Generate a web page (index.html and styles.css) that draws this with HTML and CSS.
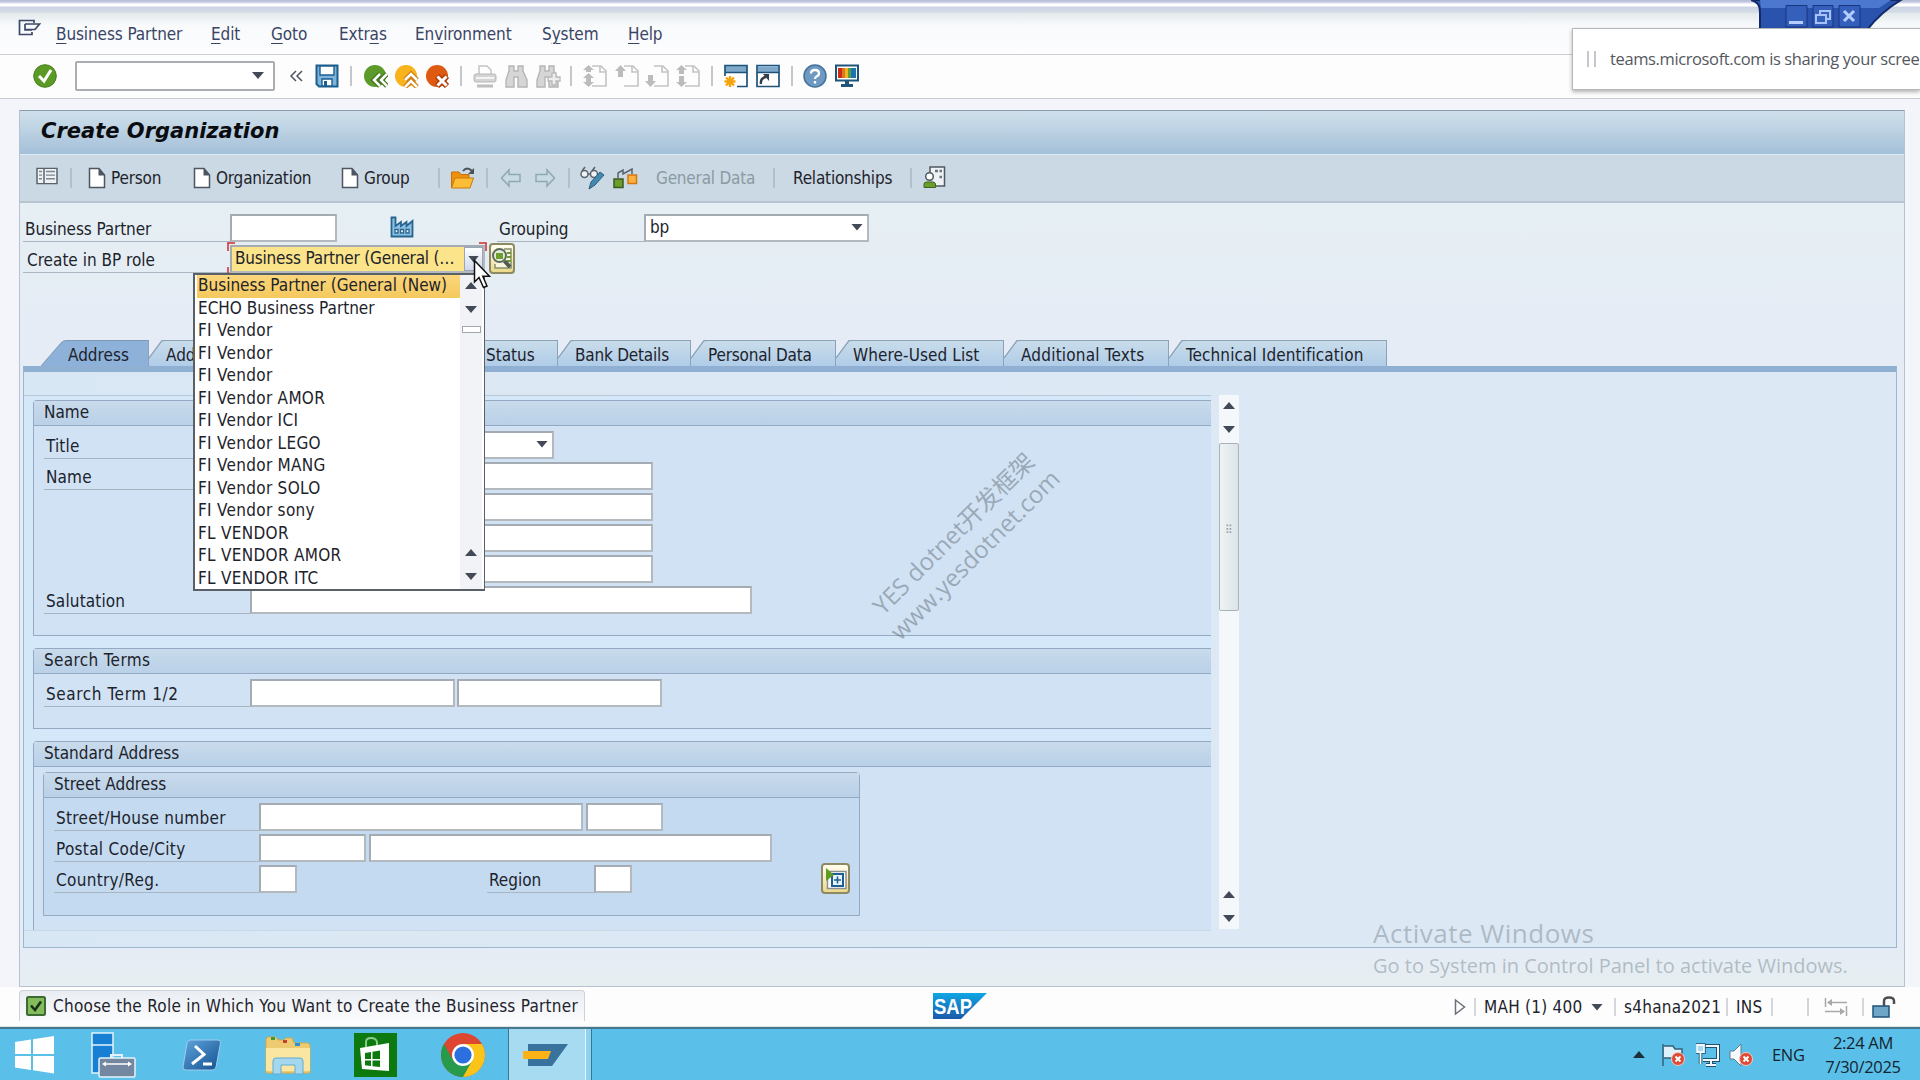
FILE: index.html
```
<!DOCTYPE html>
<html lang="en">
<head>
    <meta charset="UTF-8">
    <meta name="viewport" content="width=device-width, initial-scale=1.0">
    <title>Create Organization</title>
    <link rel="stylesheet" href="styles.css">
</head>
<body>
    <!-- shared icon shapes -->
    <svg class="defs" width="0" height="0">
        <defs>
            <linearGradient id="tabFill" x1="0" y1="0" x2="0" y2="1">
                <stop offset="0" stop-color="#c9ddea"/><stop offset="1" stop-color="#b0cce8"/>
            </linearGradient>
            <linearGradient id="sapFill" x1="0" y1="0" x2="0" y2="1">
                <stop offset="0" stop-color="#0fa6e4"/><stop offset="1" stop-color="#1b5bab"/>
            </linearGradient>
            <linearGradient id="psFill" x1="0" y1="0" x2="1" y2="1">
                <stop offset="0" stop-color="#5fa5dd"/><stop offset="1" stop-color="#14508f"/>
            </linearGradient>
            <symbol id="doc" viewBox="0 0 18 22">
                <path d="M1.5 1.5H11L16.5 8V20.500H1.500Z" fill="#fff" stroke="#4c5560" stroke-width="1.5"/>
                <path d="M10.500 1V8.500H17Z" fill="#4c5560"/>
            </symbol>
            <symbol id="page" viewBox="0 0 24 24">
                <path d="M9 2H18L23 7V22H9" fill="none" stroke="#c3c3c3" stroke-width="1.600"/>
                <path d="M17 2V8H23" fill="none" stroke="#c3c3c3" stroke-width="1.600"/>
            </symbol>
            <symbol id="bino" viewBox="0 0 24 24">
                <path d="M4 2H9V7H13V2H18V7L22 16V23H13V13H9V23H1V16L4 7Z" fill="#d6d6d6" stroke="#b5b5b5" stroke-width="1.400"/>
            </symbol>
            <symbol id="corner" viewBox="0 0 16 26" preserveAspectRatio="none">
                <path d="M0 18L13 .5H16V26H0Z" fill="url(#tabFill)"/>
                <path d="M0 18L13 .5H16" fill="none" stroke="#8ba3b8" stroke-width="1.300"/>
            </symbol>
            <symbol id="redx" viewBox="0 0 14 14">
                <circle cx="7" cy="7" r="6.500" fill="#dd4a35" stroke="#f6c9c0"/>
                <path d="M4.500 4.500L9.500 9.500M9.500 4.500L4.500 9.500" stroke="#fff" stroke-width="2"/>
            </symbol>
        </defs>
    </svg>

    <div class="frame-top"></div>

    <nav class="menubar">
        <svg width="24" height="20" viewBox="0 0 24 20"><path d="M16 4V1.500H1.500V15.500H14V13M7 5H21.500L17 10.500H8M7 5V11H14" fill="none" stroke="#3c4968" stroke-width="1.700"/></svg>
        <span><u>B</u>usiness Partner</span>
        <span><u>E</u>dit</span>
        <span><u>G</u>oto</span>
        <span>Extr<u>a</u>s</span>
        <span>En<u>v</u>ironment</span>
        <span>S<u>y</u>stem</span>
        <span><u>H</u>elp</span>
    </nav>

    <div class="toolbar">
        <svg width="24" height="24" viewBox="0 0 24 24"><circle cx="12" cy="12" r="11.300" fill="#5b9a25" stroke="#47801d"/><path d="M6 12L11 17L18 6" fill="none" stroke="#fff" stroke-width="3"/></svg>
        <div class="command"><i class="arrow-down"></i></div>
        <svg width="15" height="14" viewBox="0 0 15 14"><path d="M7 2L2 7L7 12M13 2L8 7L13 12" fill="none" stroke="#4d5461" stroke-width="1.500"/></svg>
        <svg width="24" height="24" viewBox="0 0 24 24"><path d="M1.500 1.500H22.500V22.500H4L1.500 20Z" fill="#7fb3dc" stroke="#1c5e8e" stroke-width="2"/><path d="M5 2H19V11H5ZM7 15H17V22H7Z" fill="#fff" stroke="#1c5e8e" stroke-width="1.400"/><path d="M9 17H12V22H9Z" fill="#1c5e8e"/></svg>
        <i class="sep"></i>
        <svg width="25" height="24" viewBox="0 0 25 24"><circle cx="12" cy="12" r="11" fill="#5c9a2a"/><path d="M17 10L11 16L17 22M24 10L18 16L24 22" fill="none" stroke="#3f741b" stroke-width="5"/><path d="M17 10L11 16L17 22M24 10L18 16L24 22" fill="none" stroke="#fff" stroke-width="2.500"/></svg>
        <svg width="25" height="24" viewBox="0 0 25 24"><circle cx="12" cy="12" r="11" fill="#f9b31c"/><path d="M11 16L17 10L23 16M11 23L17 17L23 23" fill="none" stroke="#cf7f10" stroke-width="5"/><path d="M11 16L17 10L23 16M11 23L17 17L23 23" fill="none" stroke="#fff" stroke-width="2.500"/></svg>
        <svg width="25" height="24" viewBox="0 0 25 24"><circle cx="12" cy="12" r="11" fill="#dd5a10"/><path d="M12 12L22 22M22 12L12 22" stroke="#b03d08" stroke-width="6"/><path d="M12.500 12.500L21.500 21.500M21.500 12.500L12.500 21.500" stroke="#fff" stroke-width="3"/></svg>
        <i class="sep"></i>
        <svg width="24" height="24" viewBox="0 0 24 24"><path d="M6 10V2H14L18 6V10" fill="#fff" stroke="#c3c3c3" stroke-width="1.500"/><rect x="1" y="10" width="22" height="8" rx="2" fill="#d4d4d4" stroke="#b7b7b7"/><path d="M3 14H21" stroke="#fff" stroke-width="1.500"/><path d="M4 22H20" stroke="#bdbdbd" stroke-width="3"/></svg>
        <svg width="24" height="24"><use href="#bino"/></svg>
        <svg width="25" height="24" viewBox="0 0 25 24"><use href="#bino" width="24" height="24"/><path d="M16 9H20V13H24V17H20V21H16V17H12V13H16Z" fill="#eee" stroke="#b9b9b9" stroke-width="1.300"/></svg>
        <i class="sep"></i>
        <svg width="24" height="24"><use href="#page"/><path d="M5.500 1L11 6H8V8H3V6H0ZM5.500 9L11 14H8V18H11L5.500 23L0 18H3V14H0Z" fill="#bcbcbc"/></svg>
        <svg width="24" height="24"><use href="#page"/><path d="M5.500 1L11 7H8V13H3V7H0Z" fill="#bcbcbc"/></svg>
        <svg width="24" height="24"><use href="#page"/><path d="M5.500 23L11 17H8V11H3V17H0Z" fill="#bcbcbc"/></svg>
        <svg width="24" height="24"><use href="#page"/><path d="M5.500 1L11 6H8V10H3V6H0ZM5.500 23L11 18H8V12H3V18H0Z" fill="#bcbcbc"/></svg>
        <i class="sep"></i>
        <svg width="24" height="24" viewBox="0 0 24 24"><path d="M1 1.500H23V22.500H10V12H1Z" fill="#fff"/><path d="M1 1.500H23V8H1Z" fill="#7ea9cb"/><path d="M1 12V1.500H23V22.500H13M1 8.500H23" fill="none" stroke="#1e5379" stroke-width="1.700"/><path d="M6 12V23M.5 17.500H11.500M2 13.500L10 21.500M10 13.500L2 21.500" stroke="#f7a30b" stroke-width="2.400"/></svg>
        <svg width="24" height="24" viewBox="0 0 24 24"><path d="M1 1.500H23V22.500H1Z" fill="#fff" stroke="#1e5379" stroke-width="1.700"/><path d="M2 2.300H22V8H2Z" fill="#7ea9cb"/><path d="M1 8.500H23" stroke="#1e5379" stroke-width="1.500"/><path d="M5 20Q4 14 10 13" fill="none" stroke="#333d47" stroke-width="2.400"/><path d="M7 10H13V17Z" fill="#333d47"/></svg>
        <i class="sep"></i>
        <svg width="24" height="24" viewBox="0 0 24 24"><circle cx="12" cy="12" r="11" fill="#6e9ac2" stroke="#44719a" stroke-width="1.500"/><path d="M8 9.500Q8 6 12 6T16 9.500Q16 11.500 13.500 12.500Q12 13.200 12 15M12 17V19.500" fill="none" stroke="#fff" stroke-width="2.300"/></svg>
        <svg width="24" height="24" viewBox="0 0 24 24"><rect x="1" y="1.500" width="22" height="15" fill="#fff" stroke="#1f5578" stroke-width="2"/><path d="M3 4H7V14H3Z" fill="#cc2a17"/><path d="M7 4H10V14H7Z" fill="#d97a1c"/><path d="M10 4H13V14H10Z" fill="#f0b323"/><path d="M13 4H16V14H13Z" fill="#5d9c3a"/><path d="M16 4H21V14H16Z" fill="#1c74b4"/><path d="M10 17H14V20H18V23H6V20H10Z" fill="#1f5578"/></svg>
    </div>

    <main class="work">
        <h1>Create Organization</h1>

        <div class="appbar">
            <svg width="22" height="18" viewBox="0 0 22 20" preserveAspectRatio="none"><path d="M1 1.500H21V18.500H1Z" fill="#eef2f5" stroke="#59636d" stroke-width="1.500"/><path d="M8 2V18" stroke="#59636d" stroke-width="1.500"/><path d="M3 5H6M3 9H6M3 13H6M10 5H19M10 9H19M10 13H19" stroke="#7c868f" stroke-width="1.600"/></svg>
            <i class="sep"></i>
            <span class="action"><svg width="18" height="22"><use href="#doc"/></svg>Person</span>
            <span class="action"><svg width="18" height="22"><use href="#doc"/></svg>Organization</span>
            <span class="action"><svg width="18" height="22"><use href="#doc"/></svg>Group</span>
            <i class="sep"></i>
            <svg width="25" height="22" viewBox="0 0 25 22"><path d="M1.500 20.500V5H9L11 7.500H19V20.500Z" fill="#f0900b" stroke="#c46f08"/><path d="M1.500 21L5 11H23.500L20 21Z" fill="#fdbd37" stroke="#c97a0d"/><path d="M13 4Q17 -1 22 4" fill="none" stroke="#4b5157" stroke-width="2"/><path d="M24 1V7H18Z" fill="#4b5157"/></svg>
            <i class="sep"></i>
            <svg width="22" height="20" viewBox="0 0 22 20"><path d="M1.500 10L9 2V6.500H20V13.500H9V18Z" fill="#c6dbe4" stroke="#8fa9b4" stroke-width="1.500"/></svg>
            <svg width="22" height="20" viewBox="0 0 22 20"><path d="M20.500 10L13 2V6.500H2V13.500H13V18Z" fill="#c6dbe4" stroke="#8fa9b4" stroke-width="1.500"/></svg>
            <i class="sep"></i>
            <svg width="25" height="24" viewBox="0 0 25 24"><circle cx="4.500" cy="8" r="3.500" fill="#eef2f4" stroke="#59636d" stroke-width="1.500"/><circle cx="14" cy="8" r="3.500" fill="#eef2f4" stroke="#59636d" stroke-width="1.500"/><path d="M8 8H10.500M2 5L5 1M12 5L15 1" stroke="#59636d" stroke-width="1.500" fill="none"/><path d="M9 23L11 16L20 6L24 9L15 19Z" fill="#4388ae" stroke="#2b607f"/></svg>
            <svg width="25" height="24" viewBox="0 0 25 24"><path d="M5 12V7L10 4V8L19 3V8" fill="none" stroke="#59636d" stroke-width="1.500"/><rect x="1" y="13" width="9" height="8.500" fill="#6b9d2c" stroke="#3c5a22" stroke-width="1.500"/><rect x="15" y="9" width="8.500" height="8.500" fill="#fbb23c" stroke="#d47712" stroke-width="1.500"/></svg>
            <span class="off">General Data</span>
            <i class="sep"></i>
            <span>Relationships</span>
            <i class="sep"></i>
            <svg width="23" height="23" viewBox="0 0 23 23"><path d="M7 7V1H21.500V20H13" fill="#eef2f4" stroke="#4f5860" stroke-width="1.500"/><path d="M12 5H15M16.500 5H19M16.500 11H19" stroke="#6c757d" stroke-width="2.500"/><circle cx="6.500" cy="10.500" r="3.800" fill="#fff" stroke="#4f5860" stroke-width="1.500"/><path d="M1 21.500V18Q1 16 4 16H9Q12.500 16 12.500 18V21.500Z" fill="#6b9d2c" stroke="#3f6420"/></svg>
        </div>

        <section class="header-form">
            <div class="row row-partner">
                <label>Business Partner</label>
                <div class="field"></div>
                <svg width="24" height="22" viewBox="0 0 24 22"><path d="M1.500 20.500V1.500H5.500V10L11 6V10L16.500 6V10L22.500 5V20.500Z" fill="#8cc0e2" stroke="#27648f" stroke-width="1.800"/><path d="M5 13.500H8V17H5ZM10.500 13.500H13.500V17H10.500ZM16 13.500H19V17H16Z" fill="#fff" stroke="#27648f" stroke-width="1.300"/></svg>
                <label>Grouping</label>
                <div class="field select">bp<i class="arrow-down"></i></div>
            </div>
            <div class="row row-role">
                <label>Create in BP role</label>
                <div class="field role">
                    <span>Business Partner (General (…</span>
                    <b><i class="arrow-down"></i></b>
                    <svg class="focus" width="260" height="34" viewBox="0 0 260 34"><path d="M1 9V1H8M1 25V32H8M252 1H259V9" fill="none" stroke="#d02a2a" stroke-width="1.500"/></svg>
                </div>
                <div class="icon-button">
                    <svg width="22" height="24" viewBox="0 0 22 24"><path d="M13 2H20V21H4V17" fill="#f7f5dc" stroke="#87906a" stroke-width="1.500"/><path d="M16 6H20M16 10H20M16 14H20" stroke="#6b9d2c" stroke-width="2"/><circle cx="8.500" cy="8.500" r="6.500" fill="#e3ecdc" stroke="#5c6b5c" stroke-width="2"/><path d="M5 6H12V12H5Z" fill="#6f9f2f"/><path d="M13.500 14L19 20" stroke="#4f5b52" stroke-width="4"/></svg>
                </div>
            </div>
        </section>

        <div class="tabs">
            <div class="tab active"><svg width="26" height="26" viewBox="0 0 26 26"><path d="M0 26L20 3Q22 .5 25 .5H26V26Z" fill="#8db1d8"/><path d="M0 26L20 3Q22 .5 25 .5H26" fill="none" stroke="#7d98b2"/></svg><span>Address</span></div>
            <div class="tab overview"><svg width="16" height="26"><use href="#corner"/></svg><span>Address Overview</span></div>
            <div class="tab ident"><svg width="16" height="26"><use href="#corner"/></svg><span></span></div>
            <div class="tab status-tab"><svg width="16" height="26"><use href="#corner"/></svg><span>Status</span></div>
            <div class="tab bank"><svg width="16" height="26"><use href="#corner"/></svg><span>Bank Details</span></div>
            <div class="tab personal"><svg width="16" height="26"><use href="#corner"/></svg><span>Personal Data</span></div>
            <div class="tab where"><svg width="16" height="26"><use href="#corner"/></svg><span>Where-Used List</span></div>
            <div class="tab texts"><svg width="16" height="26"><use href="#corner"/></svg><span>Additional Texts</span></div>
            <div class="tab technical"><svg width="16" height="26"><use href="#corner"/></svg><span>Technical Identification</span></div>
        </div>

        <section class="tab-panel">
            <div class="scroll-area">
                <div class="group group-name">
                    <h2>Name</h2>
                    <div class="row"><label>Title</label><div class="field select w-title"><i class="arrow-down"></i></div></div>
                    <div class="row"><label>Name</label><div class="field w-name"></div></div>
                    <div class="row"><label class="blank"></label><div class="field w-name"></div></div>
                    <div class="row"><label class="blank"></label><div class="field w-name"></div></div>
                    <div class="row"><label class="blank"></label><div class="field w-name"></div></div>
                    <div class="row"><label>Salutation</label><div class="field w-salutation"></div></div>
                </div>

                <div class="group group-search">
                    <h2>Search Terms</h2>
                    <div class="row"><label>Search Term 1/2</label><div class="field w-term"></div><div class="field w-term"></div></div>
                </div>

                <div class="group group-standard">
                    <h2>Standard Address</h2>
                    <div class="group group-street">
                        <h2>Street Address</h2>
                        <div class="row"><label>Street/House number</label><div class="field w-street"></div><div class="field w-house"></div></div>
                        <div class="row"><label>Postal Code/City</label><div class="field w-postal"></div><div class="field w-city"></div></div>
                        <div class="row">
                            <label>Country/Reg.</label><div class="field w-code"></div>
                            <label class="region">Region</label><div class="field w-code"></div>
                            <div class="icon-button expand">
                                <svg width="24" height="26" viewBox="0 0 24 26"><path d="M3.500 5.500H22V22.500H3.500Z" fill="#fff" stroke="#8b8f94" stroke-width="1.500"/><path d="M8 8H19V20H8Z" fill="#e8f4fb" stroke="#1d5f92" stroke-width="2"/><path d="M10 14H17M13.500 10.500V17.500" stroke="#1d5f92" stroke-width="1.600"/><path d="M2 2L10 9L2 15Z" fill="#5f9a22"/></svg>
                            </div>
                        </div>
                    </div>
                </div>
            </div>

            <div class="scrollbar">
                <i class="arrow-up"></i>
                <i class="arrow-down"></i>
                <div class="thumb">⠿</div>
                <i class="arrow-up last"></i>
                <i class="arrow-down"></i>
            </div>
        </section>
    </main>

    <div class="statusbar">
        <div class="message">
            <svg width="20" height="20" viewBox="0 0 20 20"><rect x="1" y="1" width="18" height="18" rx="1.500" fill="#84bb5c" stroke="#3b6b33" stroke-width="2"/><path d="M5 9.500L9 14L15 5.500" fill="none" stroke="#16301a" stroke-width="2.500"/></svg>
            <span>Choose the Role in Which You Want to Create the Business Partner</span>
        </div>
        <svg class="sap" width="55" height="27" viewBox="0 0 55 27"><path d="M0 0H54L28 26H0Z" fill="url(#sapFill)"/><text x="1" y="21" textLength="38" lengthAdjust="spacingAndGlyphs">SAP</text></svg>
        <div class="system">
            <svg width="12" height="18" viewBox="0 0 12 18"><path d="M1.500 2L10.500 9L1.500 16Z" fill="#fff" stroke="#6c7179" stroke-width="1.500"/></svg>
            <i class="sep"></i>
            <span>MAH (1) 400</span>
            <i class="arrow-down"></i>
            <i class="sep"></i>
            <span>s4hana2021</span>
            <i class="sep"></i>
            <span>INS</span>
            <i class="sep"></i>
            <i class="sep"></i>
            <svg width="24" height="18" viewBox="0 0 24 18"><path d="M1.500 0V9M4 4.500H23M22.500 8V18M1 13.500H20" stroke="#a9a9a9" stroke-width="1.500"/><path d="M3 4.500L8 1V8ZM21 13.500L16 10V17Z" fill="#a9a9a9"/></svg>
            <i class="sep"></i>
            <svg width="24" height="22" viewBox="0 0 24 22"><path d="M12 10V5Q12 1.500 17 1.500T22 5V8" fill="none" stroke="#4b4f54" stroke-width="2.500"/><rect x="1" y="10" width="16" height="11" fill="#6fa6c8" stroke="#1f5379" stroke-width="1.500"/></svg>
        </div>
    </div>

    <footer class="taskbar">
        <svg class="start" width="40" height="38" viewBox="0 0 40 38"><path d="M0 6L16 3.500V18H0ZM18 3.200L39 0V18H18ZM0 20H16V34L0 31.500ZM18 20H39V37.500L18 34.300Z" fill="#fff"/></svg>
        <svg width="46" height="46" viewBox="0 0 46 46"><rect x="1" y="1" width="21" height="40" fill="#1780d4" stroke="#e4f3fb" stroke-width="1.500"/><path d="M1 13H22" stroke="#e4f3fb" stroke-width="1.500"/><path d="M20 27V23H31V27" fill="none" stroke="#e4f3fb" stroke-width="2"/><rect x="8" y="26" width="36" height="19" rx="1.500" fill="#7487a0" stroke="#e4f3fb" stroke-width="1.500"/><path d="M13 32H39" stroke="#fff" stroke-width="1.500"/><path d="M11 32L15 29.500V34.500ZM41 32L37 29.500V34.500Z" fill="#fff"/></svg>
        <svg width="40" height="32" viewBox="0 0 40 32"><path d="M8 1H36Q39 1 38.500 4L34 28Q33.500 31 30 31H4Q.5 31 1 28L5 4Q5.500 1 8 1Z" fill="url(#psFill)" stroke="#9ecbec"/><path d="M13 7L22 15.500L10 25M21 25H30" fill="none" stroke="#fff" stroke-width="3"/></svg>
        <svg width="48" height="40" viewBox="0 0 48 40"><path d="M2 5Q2 2 5 2H12L14 5H20L22 3H28L30 8H43Q46 8 46 11V38H2Z" fill="#eecb70" stroke="#d6ab4a"/><path d="M2 13H46V36H2Z" fill="#fae6a0"/><path d="M7 2H11V5H7Z" fill="#3a9a3a"/><path d="M19 5H23V8H19Z" fill="#c9402f"/><path d="M31 8H36V11H31Z" fill="#2d8fd4"/><path d="M9 39V26Q9 23 12 23H36Q39 23 39 26V39H31V30H17V39Z" fill="#a5d8ef" stroke="#5daed6"/></svg>
        <svg width="43" height="44" viewBox="0 0 43 44"><rect width="43" height="44" fill="#0c7a0e"/><path d="M12 14V9Q12 5 17 5T23 9V13" fill="none" stroke="#8cc98c" stroke-width="2"/><path d="M6 15L35 10V38L8 36Z" fill="#fff"/><path d="M11 20L17 19V26H11ZM18.500 18.800L26 17.500V26H18.500ZM11 27.500H17V33L11 32.300ZM18.500 27.500H26V34L18.500 33.200Z" fill="#0c7a0e"/></svg>
        <svg width="46" height="46" viewBox="0 0 46 46"><circle cx="23" cy="23" r="22" fill="#dd4631"/><path d="M4 12A22 22 0 0 0 23 45L33 28L23 32L13 28Z" fill="#279a4b"/><path d="M23 12H42A22 22 0 0 1 23 45L32.500 28Z" fill="#fbc41b"/><circle cx="23" cy="23" r="11" fill="#fff"/><circle cx="23" cy="23" r="8.600" fill="#2b6fe0"/></svg>
        <div class="task-active"><svg width="46" height="22" viewBox="0 0 46 22"><path d="M5 0H45L29 22H5Z" fill="#38729d"/><path d="M0 7H28L25 15H0Z" fill="#fbb216"/></svg></div>
        <div class="tray">
            <i class="arrow-up"></i>
            <svg width="24" height="24" viewBox="0 0 24 24"><path d="M2 23V1M3 3H12L14 6H21V15H3" fill="#dff1fa" stroke="#33617c" stroke-width="1.500"/><use href="#redx" x="10" y="9" width="14" height="14"/></svg>
            <svg width="24" height="24" viewBox="0 0 24 24"><path d="M8 3H22V17H7M15 17V21M10 22H20" fill="none" stroke="#21506c" stroke-width="4"/><path d="M8 3H22V17H7M15 17V21M10 22H20" fill="none" stroke="#eef8fd" stroke-width="2"/><path d="M1 2H8V9H1ZM4.500 9V21" fill="#a9d9ee" stroke="#21506c" stroke-width="3.500"/><path d="M1 2H8V9H1ZM4.500 9V21" fill="#a9d9ee" stroke="#eef8fd" stroke-width="1.800"/></svg>
            <svg width="24" height="24" viewBox="0 0 24 24"><path d="M1 8H5L12 1V23L5 16H1Z" fill="#f4fafd" stroke="#5e7c8c"/><use href="#redx" x="10" y="9" width="14" height="14"/></svg>
            <span>ENG</span>
            <div class="clock">2:24 AM<br>7/30/2025</div>
        </div>
    </footer>

    <!-- open role list -->
    <div class="dropdown">
        <ul>
            <li class="selected tight">Business Partner (General (New)</li>
            <li class="tight">ECHO Business Partner</li>
            <li>FI Vendor</li>
            <li>FI Vendor</li>
            <li>FI Vendor</li>
            <li>FI Vendor AMOR</li>
            <li>FI Vendor ICI</li>
            <li>FI Vendor LEGO</li>
            <li>FI Vendor MANG</li>
            <li>FI Vendor SOLO</li>
            <li>FI Vendor sony</li>
            <li>FL VENDOR</li>
            <li>FL VENDOR AMOR</li>
            <li>FL VENDOR ITC</li>
        </ul>
        <div class="list-scroll">
            <i class="arrow-up"></i>
            <i class="arrow-down"></i>
            <div class="list-thumb"></div>
            <i class="arrow-up last"></i>
            <i class="arrow-down"></i>
        </div>
    </div>

    <svg class="cursor" width="20" height="32" viewBox="0 0 20 32"><path d="M1.500 1.500V23L6 18.500L10.500 28.500L14 27L9.800 17.300H16.500Z" fill="#fff" stroke="#111" stroke-width="1.500"/></svg>

    <!-- remote desktop bar -->
    <svg class="rdp-bar" width="152" height="30" viewBox="0 0 152 30">
        <path d="M0 0Q9 2 9 12V30H116Q130 12 150 0Z" fill="#2a53ad" stroke="#122a66" stroke-width="2"/>
        <path d="M9 0H140L128 8H10Z" fill="#4d78cf"/>
        <path d="M35 5.500H56V27H35ZM62 5.500H82V27H62ZM88 5.500H109V27H88Z" fill="#3460bb" stroke="#173581"/>
        <path d="M38 22.500H52" stroke="#b6ceff" stroke-width="3"/>
        <path d="M65 15H75V23H65ZM69 15V11H79V19H75" fill="none" stroke="#a7c2f7" stroke-width="2"/>
        <path d="M93 11L103 21M103 11L93 21" stroke="#b6ceff" stroke-width="3"/>
    </svg>
    <div class="share-toast"><i></i><span>teams.microsoft.com is sharing your scree</span></div>

    <div class="watermark">YES dotnet开发框架<br>www.yesdotnet.com</div>
    <div class="activate"><strong>Activate Windows</strong><span>Go to System in Control Panel to activate Windows.</span></div>
</body>
</html>
```
FILE: styles.css
```
* {
    box-sizing: border-box;
}

body {
    margin: 0;
    width: 1920px;
    height: 1080px;
    overflow: hidden;
    position: relative;
    display: flex;
    flex-direction: column;
    font-family: "DejaVu Sans Condensed", "Open Sans", sans-serif;
    font-size: 17px;
    line-height: 22px;
    color: #1d232b;
    background-color: #f3f5fa;
    white-space: nowrap;
}

svg {
    display: block;
    flex: none;
}

.defs {
    position: absolute;
}

h1, h2, ul {
    margin: 0;
    padding: 0;
}

.arrow-down, .arrow-up {
    display: block;
    flex: none;
    width: 12px;
    height: 7px;
    background-color: #434a57;
    clip-path: polygon(0 0, 100% 0, 50% 100%);
}

.arrow-up {
    clip-path: polygon(50% 0, 100% 100%, 0 100%);
}

.sep {
    width: 2px;
    height: 20px;
    background-color: #c3c6ca;
}

/* window frame, menu and system toolbar */
.frame-top {
    height: 13px;
    flex: none;
    background: linear-gradient(#b7bdd8 0, #c3c9df 2px, #fff 4px, #fff 6px, #cbd4e3 7px, #d6dee8 13px);
}

.menubar {
    height: 42px;
    flex: none;
    display: grid;
    grid-template-columns: 38px 155px 60px 68px 76px 127px 86px auto;
    align-items: center;
    padding: 0 0 0 18px;
    color: #3a4566;
    background: linear-gradient(#e3e9ec, #f8fafb 30%, #fdfdfe);
    border-bottom: 1px solid #c9ccd0;
    letter-spacing: -0.1px;
}

.menubar svg {
    margin-top: -9px;
}

.menubar u {
    text-underline-offset: 3px;
    text-decoration-thickness: 1px;
}

.toolbar {
    height: 44px;
    flex: none;
    display: grid;
    grid-template-columns: 42px 214px 26px 35px 13px 31px 31px 35px 13px 32px 31px 34px 13px 32px 30px 31px 35px 13px 32px 35px 12px 32px 24px;
    align-items: center;
    padding: 0 0 2px 33px;
    background-color: #fdfdfe;
    border-bottom: 1px solid #c9ccd0;
}

.command {
    width: 200px;
    height: 30px;
    display: flex;
    align-items: center;
    justify-content: flex-end;
    padding-right: 9px;
    background-color: #fff;
    border: 2px solid #aaaeb3;
    border-radius: 2px;
}

/* work area */
.work {
    width: 1886px;
    height: 877px;
    flex: none;
    margin: 11px 0 0 19px;
    border: 1px solid #b6c3d0;
    border-top-color: #8b9eb0;
    background: linear-gradient(#e6eff3 90px, #e5ecf5 200px, #e5ecf5 840px, #e6eef1);
}

h1 {
    height: 44px;
    padding-left: 21px;
    font-family: "DejaVu Sans", sans-serif;
    font-size: 21px;
    font-style: italic;
    line-height: 41px;
    color: #0a0c10;
    background: linear-gradient(#cfe0eb, #b4cbdf 65%, #a2c0d9);
    border-bottom: 1px solid #dfeaf2;
}

.appbar {
    height: 48px;
    display: grid;
    grid-template-columns: 34px 18px 105px 148px 97px 12px 36px 14px 34px 34px 12px 33px 43px 117px 20px 117px 13px 24px;
    align-items: center;
    padding: 0 0 1px 16px;
    background-color: #cbd9e4;
    border-bottom: 2px solid #b7c5d1;
    letter-spacing: -0.2px;
}

.appbar > svg:first-child {
    margin-top: -3px;
}

.appbar .sep {
    background-color: #b2c0ca;
}

.action {
    display: flex;
    align-items: center;
    gap: 5px;
}

.off {
    color: #8b99a3;
}

.header-form {
    height: 137px;
    padding: 11px 0 0 3px;
}

.row {
    display: flex;
    height: 31px;
    align-items: flex-start;
}

.row label {
    height: 28px;
    padding: 4px 0 0 2px;
    border-bottom: 1px solid #a9b5c1;
}

.row .blank {
    border-color: transparent;
}

.field {
    height: 28px;
    flex: none;
    position: relative;
    background-color: #fff;
    border: 2px solid #a4abb2;
    border-right-color: #b4b9be;
    border-bottom-color: #b4b9be;
    padding: 1px 4px;
}

.select {
    display: flex;
    align-items: center;
    padding: 0 4px 2px;
}

.select .arrow-down {
    margin-left: auto;
}

.row-partner {
    display: grid;
    grid-template-columns: 207px 160px 107px 147px 225px;
    letter-spacing: -0.1px;
}

.row-partner .field:nth-child(2) {
    width: 107px;
}

.row-partner svg {
    margin-top: 2px;
}

.row-role label {
    width: 207px;
    padding-left: 4px;
}

.role {
    width: 255px;
    display: flex;
    padding: 0;
    letter-spacing: -0.2px;
    background-color: #fbe48a;
}

.role span {
    width: 232px;
    padding-left: 3px;
    line-height: 23px;
}

.role b {
    width: 19px;
    display: grid;
    place-items: center;
    background: linear-gradient(#fff, #cfd8ea);
    border: 1px solid #9aa6bb;
}

.role .arrow-down {
    width: 11px;
}

.focus {
    position: absolute;
    left: -5px;
    top: -5px;
}

.icon-button {
    width: 26px;
    height: 31px;
    display: grid;
    place-items: center;
    margin: -2px 0 0 4px;
    background: linear-gradient(#fffdee, #ecd98c);
    border: 2px solid #8d8a63;
    border-radius: 4px;
}

/* tabs */
.tabs {
    height: 26px;
    display: flex;
    padding-left: 21px;
}

.tab {
    display: flex;
    border-right: 1px solid #8ba3b8;
}

.tab span {
    flex: 1;
    padding-top: 3px;
    padding-left: 1px;
    border-top: 1px solid #8ba3b8;
    background: linear-gradient(#c9ddea, #b0cce8);
}

.tab.active {
    width: 108px;
}

.tab.active span {
    background: #8db1d8;
    border-color: #7d98b2;
}

.tab.overview { width: 164px; }
.tab.ident { width: 156px; }
.tab.status-tab { width: 89px; }
.tab.bank { width: 133px; letter-spacing: -0.2px; }
.tab.personal { width: 145px; letter-spacing: -0.2px; }
.tab.where { width: 168px; letter-spacing: 0.1px; }
.tab.texts { width: 165px; letter-spacing: 0.2px; }
.tab.technical { width: 218px; letter-spacing: 0.1px; }

.tab-panel {
    width: 1874px;
    height: 582px;
    margin-left: 3px;
    display: flex;
    padding-top: 23px;
    border: 1px solid #9db6cf;
    border-top: 6px solid #8fb0d2;
    background: linear-gradient(90deg, #d8e7f4, #dbe8f4 20%, #dde8f5 80%);
    position: relative;
}

.scroll-area {
    width: 1187px;
    height: 536px;
    padding: 4px 0 0 9px;
    overflow: hidden;
    background-color: #d5e8f9;
    border-top: 1px solid #b9c8d8;
    border-bottom: 1px solid #c8daea;
}

.group {
    border: 1px solid #93aac2;
    border-right: none;
    border-radius: 4px 0 0 0;
    background-color: #d0e2f4;
}

.group h2 {
    height: 25px;
    margin-bottom: 5px;
    padding-left: 10px;
    font-size: 17px;
    font-weight: normal;
    line-height: 23px;
    background: linear-gradient(#c9dbec, #b9d0e7);
    border-bottom: 1px solid #93aac2;
}

.group .row {
    padding-left: 10px;
    gap: 3px;
}

.group .row label {
    width: 206px;
    margin-right: -3px;
    letter-spacing: 0.15px;
}

.group-name {
    height: 236px;
    margin-bottom: 12px;
}

.group-search {
    height: 81px;
    margin-bottom: 12px;
}

.group-search h2 {
    letter-spacing: 0.35px;
}

.group-search .row {
    gap: 2px;
}

.group-search .row label {
    margin-right: -2px;
    letter-spacing: 0.6px;
}

.group-standard {
    height: 200px;
    border-bottom: none;
}

.group-street {
    width: 817px;
    height: 144px;
    margin-left: 9px;
    border-right: 1px solid #93aac2;
    border-radius: 4px 4px 0 0;
    background-color: #c3daf1;
}

.group-street .row label {
    width: 205px;
    letter-spacing: 0.3px;
}

.w-title { width: 304px; }
.w-name { width: 403px; }
.w-salutation { width: 502px; }
.w-term { width: 205px; }
.w-street { width: 324px; }
.w-house { width: 77px; }
.w-postal { width: 107px; }
.w-city { width: 403px; }
.w-code { width: 38px; }

.group-street .row .region {
    width: 107px;
    margin-left: 187px;
    letter-spacing: 0;
}

.group .row .expand {
    width: 29px;
    margin: -2px 0 0 186px;
}

.scrollbar {
    width: 20px;
    height: 534px;
    margin-left: 8px;
    display: flex;
    flex-direction: column;
    align-items: center;
    gap: 17px;
    padding: 7px 0 7px;
    background-color: #f5f8fa;
}

.scrollbar .thumb {
    width: 20px;
    height: 168px;
    margin-top: -7px;
    text-align: center;
    line-height: 172px;
    font-size: 12px;
    color: #9aa4a8;
    background: linear-gradient(90deg, #eef3f4, #dbe4e8);
    border: 1px solid #a9b2b8;
    border-radius: 2px;
}

.last {
    margin-top: auto;
}

/* status bar */
.statusbar {
    height: 40px;
    flex: none;
    display: flex;
    background-color: #fdfdfe;
    border-bottom: 1px solid #dfe3e6;
}

.message {
    width: 566px;
    height: 31px;
    margin: 3px 0 0 19px;
    display: flex;
    align-items: center;
    gap: 7px;
    padding-left: 6px;
    background: linear-gradient(#e9edf2, #fbfcfd);
    border: 1px solid #ccd2d9;
    border-bottom: none;
    border-radius: 4px 4px 0 0;
    letter-spacing: 0.26px;
}

.sap {
    margin: 6px 0 0 348px;
}

.sap text {
    font: bold 22px "Liberation Sans", Arial, sans-serif;
    fill: #fff;
}

.system {
    height: 40px;
    margin-left: 466px;
    display: grid;
    grid-template-columns: 20px 10px 107px 23px 10px 102px 10px 35px 36px 17px 38px 10px 24px;
    align-items: center;
}

.system .sep {
    height: 18px;
    background-color: #d3d6da;
}

.system span {
    letter-spacing: 0.25px;
}

/* taskbar */
.taskbar {
    height: 53px;
    flex: none;
    display: flex;
    align-items: center;
    padding-left: 15px;
    background-color: #5bc0e9;
    border-top: 2px solid #44798f;
}

.taskbar > svg:nth-child(2) { margin-left: 36px; }
.taskbar > svg:nth-child(3) { margin-left: 45px; }
.taskbar > svg:nth-child(4) { margin-left: 42px; }
.taskbar > svg:nth-child(5) { margin-left: 42px; }
.taskbar > svg:nth-child(6) { margin-left: 43px; }

.task-active {
    width: 84px;
    height: 51px;
    display: grid;
    place-items: center;
    margin-left: 22px;
    padding-right: 8px;
    background: linear-gradient(90deg, #a6dbf2 76px, #e4f5fc 76px, #e4f5fc 77px, #8dd2ee 77px);
    border: 1px solid #3b7690;
    border-width: 0 1px;
}

.tray {
    margin-left: 1041px;
    display: grid;
    grid-template-columns: 28px 35px 33px 43px 53px 76px;
    align-items: center;
    font-family: "Open Sans", sans-serif;
    font-size: 16.5px;
    letter-spacing: -0.3px;
    color: #14242e;
}

.tray .arrow-up {
    background-color: #1d2f3a;
}

.clock {
    line-height: 24px;
    text-align: center;
}

/* overlays */
.dropdown {
    position: absolute;
    left: 193px;
    top: 273px;
    width: 292px;
    height: 318px;
    display: flex;
    background-color: #fff;
    border: 2px solid #5a6068;
    border-width: 2px 1px 2px 2px;
    letter-spacing: 0.3px;
}

.dropdown ul {
    width: 265px;
    padding: 0 0 0 2px;
    list-style: none;
}

.dropdown li {
    height: 22.5px;
    line-height: 21px;
    padding-left: 1px;
}

.dropdown .tight {
    letter-spacing: 0;
}

.dropdown .selected {
    background: linear-gradient(#fbd67c, #f4c95d);
}

.list-scroll {
    width: 22px;
    display: flex;
    flex-direction: column;
    align-items: center;
    gap: 17px;
    padding: 7px 0 9px;
    background-color: #f1f3f6;
}

.list-thumb {
    width: 19px;
    height: 7px;
    margin-top: -4px;
    background-color: #fff;
    border: 1px solid #a3a8ae;
}

.cursor {
    position: absolute;
    left: 473px;
    top: 259px;
}

.rdp-bar {
    position: absolute;
    left: 1751px;
    top: 0;
}

.share-toast {
    position: absolute;
    left: 1572px;
    top: 28px;
    width: 348px;
    height: 62px;
    display: flex;
    align-items: center;
    gap: 14px;
    padding-left: 14px;
    font-family: "Open Sans", sans-serif;
    font-size: 16.5px;
    letter-spacing: -0.38px;
    color: #54585e;
    background-color: #fff;
    border: 1px solid #b6b8bb;
    border-right: none;
    box-shadow: 0 2px 4px rgba(0, 0, 0, 0.3);
}

.share-toast i {
    width: 9px;
    height: 16px;
    flex: none;
    border: 2px solid #c5c7ca;
    border-width: 0 2px;
}

.watermark {
    position: absolute;
    left: 844px;
    top: 514px;
    width: 240px;
    font: 400 24px/30px "Open Sans", "Noto Sans CJK SC", sans-serif;
    text-align: center;
    color: rgba(100, 110, 120, 0.5);
    transform: rotate(-45deg);
}

.activate {
    position: absolute;
    left: 1373px;
    top: 915px;
    display: flex;
    flex-direction: column;
    font-family: "Open Sans", sans-serif;
    color: rgba(140, 155, 165, 0.6);
}

.activate strong {
    font-size: 26px;
    font-weight: normal;
    line-height: 36px;
    letter-spacing: 0.5px;
}

.activate span {
    font-size: 20px;
    line-height: 30px;
}
```
